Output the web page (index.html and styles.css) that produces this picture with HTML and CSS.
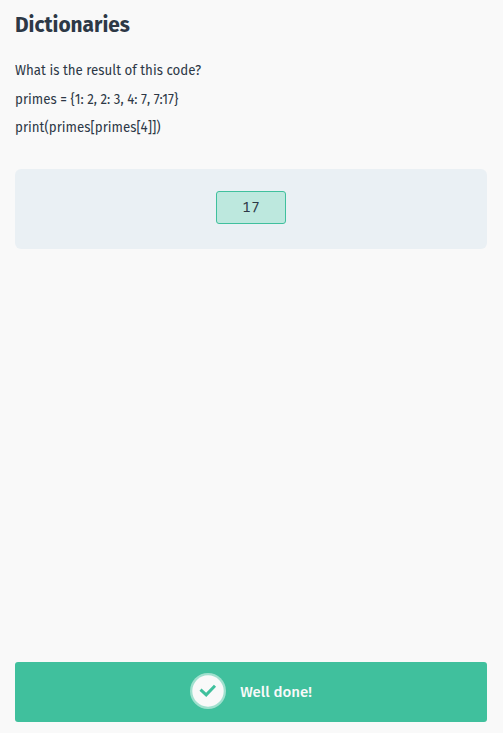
FILE: index.html
```html
<!DOCTYPE html>
<html lang="en">
<head>
<meta charset="utf-8">
<title>Dictionaries</title>
<link rel="stylesheet" href="styles.css">
</head>
<body>
<main class="quiz">
  <h1 class="title"><span class="fit">Dictionaries</span></h1>
  <div class="question">
    <p><span class="fit">What is the result of this code?</span></p>
    <p><span class="fit">primes = {1: 2, 2: 3, 4: 7, 7:17}</span></p>
    <p><span class="fit">print(primes[primes[4]])</span></p>
  </div>
  <div class="answer"><div class="value">17</div></div>
  <div class="result">
    <svg class="check" viewBox="0 0 36 36"><circle cx="18" cy="18" r="18" fill="#a0e0ce"/><circle cx="18" cy="18" r="15.7" fill="#f9f9f9"/><path d="M10.5 16.6l5.7 5.2 8.8-9" fill="none" stroke="#40c09d" stroke-width="3"/></svg>
    <span class="message">Well done!</span>
  </div>
</main>
</body>
</html>
```
FILE: styles.css
```css
* { box-sizing: border-box; }
body { margin: 0; background: #f9f9f9; color: #2d3846; font-family: "Fira Sans", "Open Sans", "Noto Sans", sans-serif; }
.quiz { display: flex; flex-direction: column; height: 733px; padding: 10px 16px 11px 15px; }
.fit { display: inline-block; transform-origin: left; white-space: nowrap; }
.title { margin: 0; font-size: 22px; font-weight: 700; line-height: 30px; }
.title .fit { transform: scaleX(.948); }
.question { margin-top: 16px; font-size: 15px; }
.question .fit { transform: scaleX(.888); }
.question p { margin: 0; height: 28.5px; line-height: 28.5px; }
.answer { margin-top: 27px; height: 80px; padding-top: 22px; border-radius: 6px; background: #eaf0f4; display: flex; justify-content: center; }
.value { width: 70px; height: 33px; border: 1px solid #40c09d; border-radius: 3px; background: #bde8de; text-align: center; font: 15px/30px "Fira Mono", "DejaVu Sans Mono", monospace; }
.result { margin-top: auto; height: 60px; border-radius: 3px; background: #40c09d; color: #f9f9f9; display: flex; align-items: center; justify-content: center; gap: 14px; }
.check { width: 36px; height: 36px; margin-bottom: 2px; }
.message { font-size: 15px; font-weight: 500; }
```
